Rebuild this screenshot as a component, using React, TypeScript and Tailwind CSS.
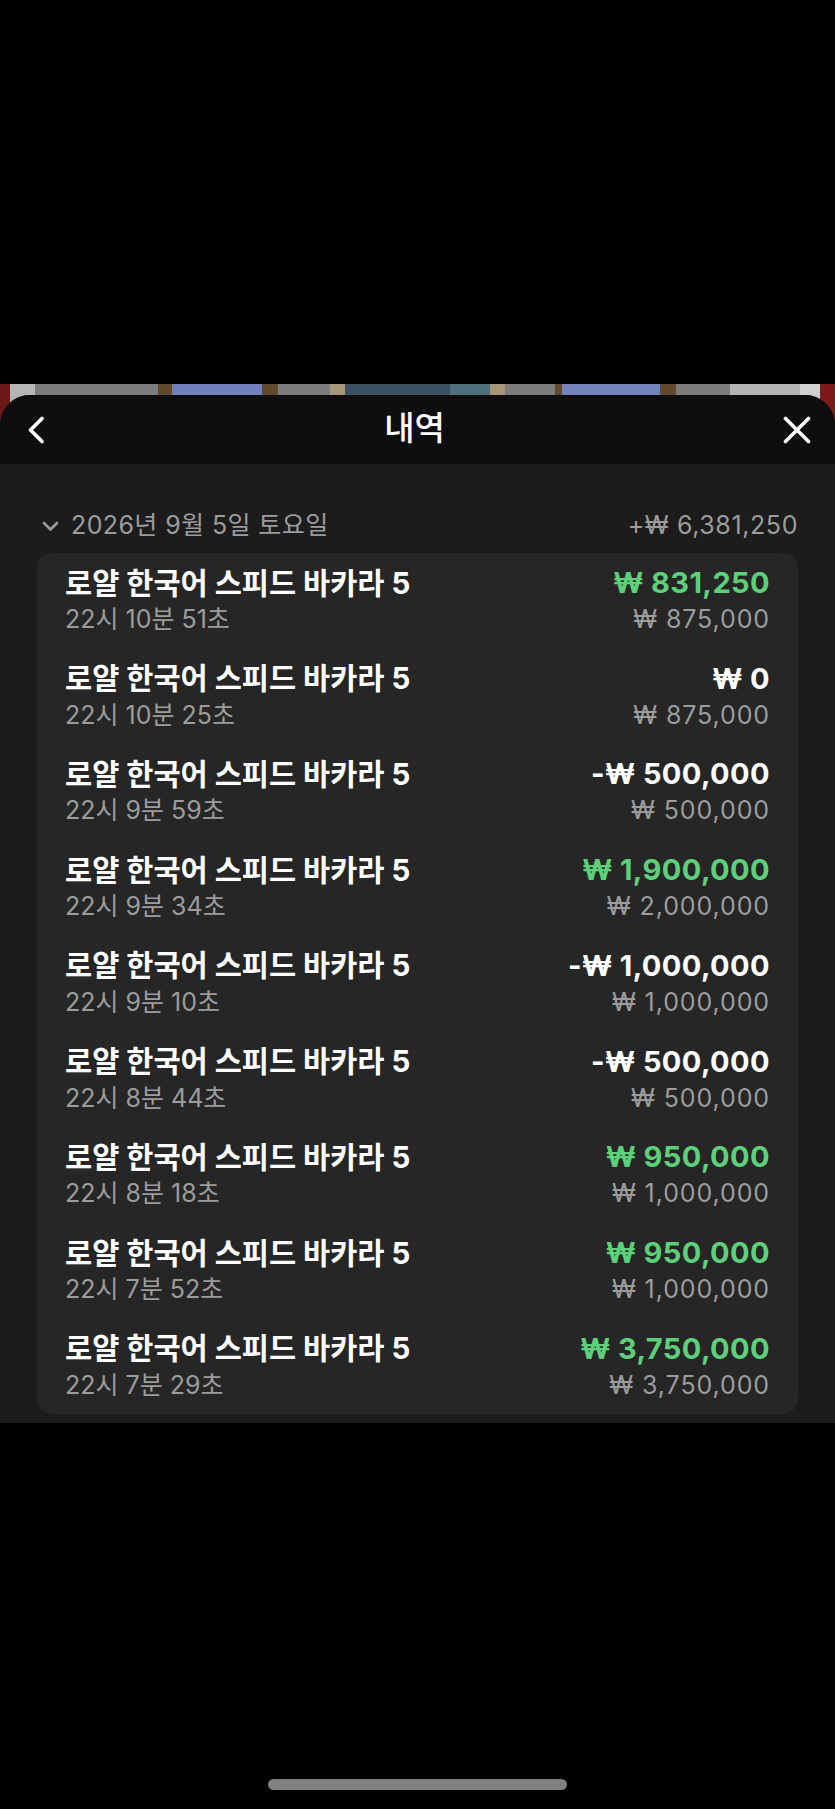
import React from 'react';

interface HistoryRow {
  time: string;
  amount: string;
  stake: string;
  win: boolean;
}

const rows: HistoryRow[] = [
  { time: '22시 10분 51초', amount: '₩ 831,250', stake: '₩ 875,000', win: true },
  { time: '22시 10분 25초', amount: '₩ 0', stake: '₩ 875,000', win: false },
  { time: '22시 9분 59초', amount: '-₩ 500,000', stake: '₩ 500,000', win: false },
  { time: '22시 9분 34초', amount: '₩ 1,900,000', stake: '₩ 2,000,000', win: true },
  { time: '22시 9분 10초', amount: '-₩ 1,000,000', stake: '₩ 1,000,000', win: false },
  { time: '22시 8분 44초', amount: '-₩ 500,000', stake: '₩ 500,000', win: false },
  { time: '22시 8분 18초', amount: '₩ 950,000', stake: '₩ 1,000,000', win: true },
  { time: '22시 7분 52초', amount: '₩ 950,000', stake: '₩ 1,000,000', win: true },
  { time: '22시 7분 29초', amount: '₩ 3,750,000', stake: '₩ 3,750,000', win: true },
];

// blurry game table strip peeking out above the sheet
const GameStrip: React.FC = () => (
  <div className="absolute inset-x-0 top-0 h-[60px] flex brightness-90 blur-[0.5px]">
    <div className="w-[10px] bg-[#7a1c1c]" />
    <div className="w-[25px] bg-[#c9c9c9]" />
    <div className="w-[123px] bg-[#8a8a8a]" />
    <div className="w-[14px] bg-[#6b5230]" />
    <div className="w-[90px] bg-[#7f8fd0]" />
    <div className="w-[16px] bg-[#6b5230]" />
    <div className="w-[52px] bg-[#8a8a8a]" />
    <div className="w-[15px] bg-[#b8a888]" />
    <div className="w-[105px] bg-[#3f5a6c]" />
    <div className="w-[40px] bg-[#5a7a8a]" />
    <div className="w-[15px] bg-[#b8a888]" />
    <div className="w-[50px] bg-[#8a8a8a]" />
    <div className="w-[7px] bg-[#6b5230]" />
    <div className="w-[98px] bg-[#8090d0]" />
    <div className="w-[16px] bg-[#6b5230]" />
    <div className="w-[54px] bg-[#8a8a8a]" />
    <div className="w-[70px] bg-[#c8c8c8]" />
    <div className="w-[20px] bg-[#e8e8e8]" />
    <div className="flex-1 bg-[#8a1c1c]" />
  </div>
);

export default function App() {
  return (
    <div className="min-h-[1809px] bg-black flex flex-col font-['Inter','Noto_Sans_CJK_KR',sans-serif]">
      <div className="h-[384px] shrink-0" />

      <div className="relative">
        <GameStrip />
        <div className="relative mt-[11px] rounded-t-[30px] overflow-hidden bg-[#1c1c1c]">
          {/* header */}
          <div className="h-[69px] bg-[#0e0e0e] flex items-center justify-between pl-[26px] pr-[24px]">
            <svg width="20" height="28" viewBox="0 0 20 28" fill="none">
              <path d="M16 2.5 L4.5 14 L16 25.5" stroke="white" strokeWidth="3.6" strokeLinecap="round" strokeLinejoin="round" />
            </svg>
            <h1 className="text-white text-[33px] font-medium leading-none -mt-[2px]">내역</h1>
            <svg width="28" height="28" viewBox="0 0 28 28" fill="none">
              <path d="M2.5 2.5 L25.5 25.5 M25.5 2.5 L2.5 25.5" stroke="white" strokeWidth="3.6" strokeLinecap="round" />
            </svg>
          </div>

          {/* body */}
          <div className="pt-[42px] pb-[9px] px-[37px]">
            <div className="h-[40px] mb-[7px] flex items-center justify-between text-[#9c9c9c] text-[25px]">
              <div className="flex items-center gap-[12px] pl-[5px]">
                <svg width="17" height="11" viewBox="0 0 17 11" fill="none">
                  <path d="M2 2 L8.5 8.5 L15 2" stroke="#9c9c9c" strokeWidth="2.6" strokeLinecap="round" strokeLinejoin="round" />
                </svg>
                <span className="tracking-[0.4px]">2026년 9월 5일 토요일</span>
              </div>
              <span className="tracking-[0.6px]">+₩ 6,381,250</span>
            </div>

            <div className="bg-[#262626] rounded-[15px] px-[28px]">
              {rows.map((r, i) => (
                <div key={i} className="h-[95.7px] flex flex-col justify-center">
                  <div className="flex items-center justify-between h-[38px]">
                    <span className="text-white text-[29.5px] font-bold">로얄 한국어 스피드 바카라 5</span>
                    <span className={`text-[29px] font-bold tracking-[0.4px] ${r.win ? 'text-[#5fd07a]' : 'text-white'}`}>{r.amount}</span>
                  </div>
                  <div className="flex items-center justify-between h-[36px] text-[#9c9c9c] text-[25px]">
                    <span>{r.time}</span>
                    <span className="tracking-[0.9px]">{r.stake}</span>
                  </div>
                </div>
              ))}
            </div>
          </div>
        </div>
      </div>

      <div className="mt-[356px] h-[11px] w-[299px] self-center rounded-full bg-[#808080]" />
    </div>
  );
}
